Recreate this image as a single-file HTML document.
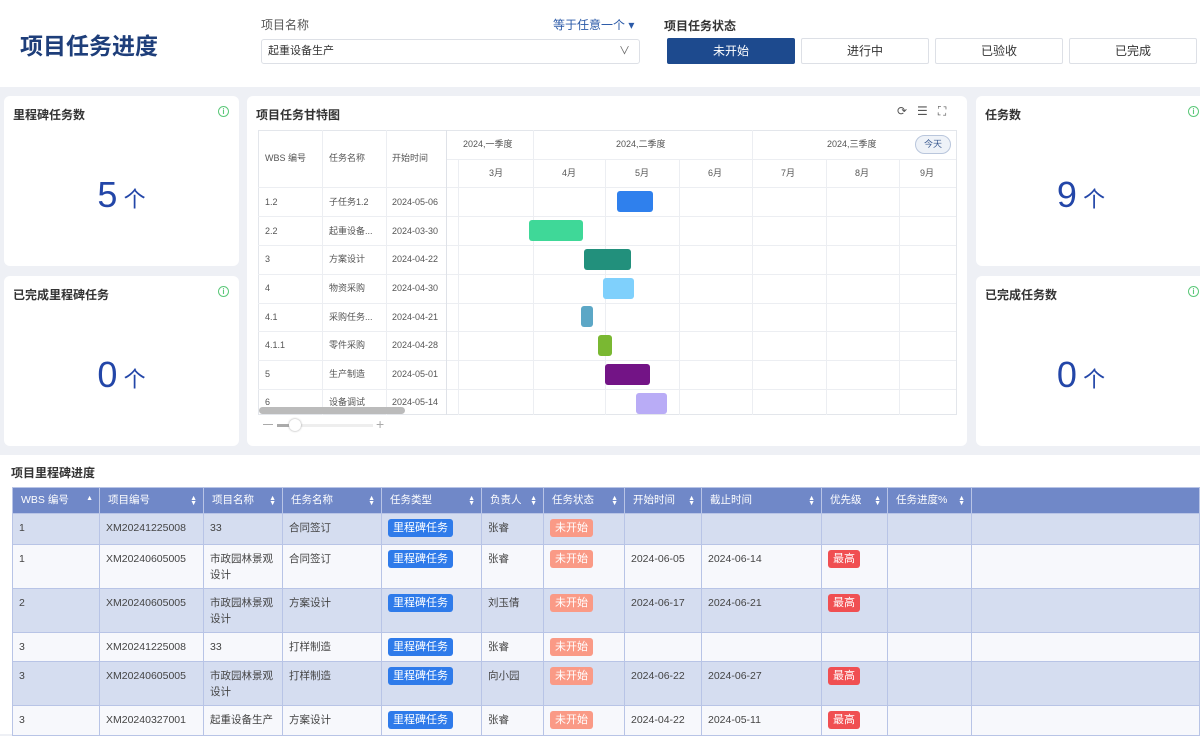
<!DOCTYPE html>
<html><head><meta charset="utf-8"><style>
*{box-sizing:border-box;margin:0;padding:0}
body{width:1200px;height:734px;overflow:hidden;background:#eef0f5;font-family:"Liberation Sans","Noto Sans CJK SC",sans-serif;color:#333;position:relative;font-size:11px}
.abs{position:absolute}
.card{position:absolute;background:#fff;border-radius:6px}
.ct{position:absolute;left:9px;top:10px;font-size:12px;font-weight:bold;color:#333}
.info{position:absolute;top:10px;width:11px;height:11px;border:1.3px solid #5cc87a;border-radius:50%;color:#5cc87a;font-size:8px;line-height:9px;text-align:center;font-weight:bold}
.num{position:absolute;width:100%;text-align:center;color:#2346a8;font-size:36px}
.num span{font-size:22px}
.btn{position:absolute;top:38px;height:26px;border:1px solid #dde0e6;background:#fff;font-size:12px;text-align:center;line-height:24px;color:#333;border-radius:2px}
.g{position:absolute;font-size:9px;color:#555;line-height:11px}
.vl{position:absolute;width:1px;background:#eceef2}
.hl{position:absolute;height:1px;background:#eceef2}
.bar{position:absolute;height:21px;border-radius:3px}
table{border-collapse:collapse;position:absolute;left:12px;top:487px;width:1188px;font-size:10.5px;table-layout:fixed}
td,th{border:1px solid #b8c4e6;vertical-align:top;padding:6px 6px 0;color:#444;text-align:left;font-weight:normal;line-height:16px;overflow:hidden;white-space:normal}
th{background:#7088c8;color:#fff;height:26px;padding:4px 8px;position:relative;line-height:16px}
th i{position:absolute;right:6px;top:8px;font-style:normal;font-size:7px;line-height:5px}
tr.a td{background:#d5ddf0}
tr.b td{background:#f7f8fc}
.tg,.ts,.tp{display:inline-block;color:#fff;border-radius:3px;padding:0 5px;font-size:11px;line-height:18px;margin-top:-1px}
.tg{background:#2f7bea}.ts{background:#fa9a86}.tp{background:#f04f52}
</style></head><body>
<div class="abs" style="left:0;top:0;width:1200px;height:87px;background:#fff"></div>
<div class="abs" style="left:20px;top:27px;font-size:23px;font-weight:bold;color:#1e3e7a">项目任务进度</div>
<div class="abs" style="left:261px;top:16px;font-size:12px;color:#555">项目名称</div>
<div class="abs" style="left:553px;top:16px;font-size:12px;color:#2b5aa8">等于任意一个 ▾</div>
<div class="abs" style="left:261px;top:39px;width:379px;height:25px;border:1px solid #dde0e6;border-radius:3px;font-size:11px;line-height:23px;padding-left:6px">起重设备生产<span style="position:absolute;right:9px;color:#666">&#x2228;</span></div>
<div class="abs" style="left:664px;top:17px;font-size:12px;font-weight:bold">项目任务状态</div>
<div class="btn" style="left:667px;width:128px;background:#1d4a8e;color:#fff;border-color:#1d4a8e">未开始</div>
<div class="btn" style="left:801px;width:128px">进行中</div>
<div class="btn" style="left:935px;width:128px">已验收</div>
<div class="btn" style="left:1069px;width:128px">已完成</div>

<div class="card" style="left:4px;top:96px;width:235px;height:170px"><div class="ct">里程碑任务数</div><div class="info" style="left:214px">i</div><div class="num" style="top:78px">5<span> 个</span></div></div>
<div class="card" style="left:4px;top:276px;width:235px;height:170px"><div class="ct">已完成里程碑任务</div><div class="info" style="left:214px">i</div><div class="num" style="top:78px">0<span> 个</span></div></div>
<div class="card" style="left:976px;top:96px;width:230px;height:170px"><div class="ct">任务数</div><div class="info" style="left:212px">i</div><div class="num" style="top:78px;width:210px">9<span> 个</span></div></div>
<div class="card" style="left:976px;top:276px;width:230px;height:170px"><div class="ct">已完成任务数</div><div class="info" style="left:212px">i</div><div class="num" style="top:78px;width:210px">0<span> 个</span></div></div>

<div class="card" style="left:247px;top:96px;width:720px;height:350px">
<div class="ct">项目任务甘特图</div>
<div class="abs" style="left:650px;top:8px;font-size:12px;color:#555;letter-spacing:10px">⟳☰⛶</div>
</div>
<div class="abs" style="left:258px;top:130px;width:699px;height:285px;border:1px solid #e3e6eb;background:#fff"></div>
<div class="hl" style="left:446px;top:159px;width:510px"></div>
<div class="hl" style="left:258px;top:187px;width:698px"></div>
<div class="hl" style="left:258px;top:216px;width:698px"></div><div class="hl" style="left:258px;top:245px;width:698px"></div><div class="hl" style="left:258px;top:274px;width:698px"></div><div class="hl" style="left:258px;top:303px;width:698px"></div><div class="hl" style="left:258px;top:331px;width:698px"></div><div class="hl" style="left:258px;top:360px;width:698px"></div><div class="hl" style="left:258px;top:389px;width:698px"></div>
<div class="vl" style="left:322px;top:130px;height:285px"></div><div class="vl" style="left:386px;top:130px;height:285px"></div><div class="vl" style="left:446px;top:130px;height:285px;background:#dfe2e8"></div>
<div class="vl" style="left:458px;top:159px;height:256px"></div><div class="vl" style="left:533px;top:130px;height:285px"></div><div class="vl" style="left:605px;top:159px;height:256px"></div><div class="vl" style="left:679px;top:159px;height:256px"></div><div class="vl" style="left:752px;top:130px;height:285px"></div><div class="vl" style="left:826px;top:159px;height:256px"></div><div class="vl" style="left:899px;top:159px;height:256px"></div>
<div class="g" style="left:265px;top:153px">WBS 编号</div><div class="g" style="left:329px;top:153px">任务名称</div><div class="g" style="left:392px;top:153px">开始时间</div>
<div class="g" style="left:463px;top:139px">2024,一季度</div><div class="g" style="left:616px;top:139px">2024,二季度</div><div class="g" style="left:827px;top:139px">2024,三季度</div>
<div class="abs" style="left:915px;top:135px;width:36px;height:19px;border:1px solid #b9c6dc;background:#eef2f8;border-radius:10px;font-size:9px;color:#3a5a90;text-align:center;line-height:17px">今天</div>
<div class="g" style="left:489px;top:168px">3月</div><div class="g" style="left:562px;top:168px">4月</div><div class="g" style="left:635px;top:168px">5月</div><div class="g" style="left:708px;top:168px">6月</div><div class="g" style="left:781px;top:168px">7月</div><div class="g" style="left:855px;top:168px">8月</div><div class="g" style="left:920px;top:168px">9月</div>
<div class="g" style="left:265px;top:197px">1.2</div><div class="g" style="left:329px;top:197px">子任务1.2</div><div class="g" style="left:392px;top:197px">2024-05-06</div>
<div class="g" style="left:265px;top:226px">2.2</div><div class="g" style="left:329px;top:226px">起重设备...</div><div class="g" style="left:392px;top:226px">2024-03-30</div>
<div class="g" style="left:265px;top:254px">3</div><div class="g" style="left:329px;top:254px">方案设计</div><div class="g" style="left:392px;top:254px">2024-04-22</div>
<div class="g" style="left:265px;top:283px">4</div><div class="g" style="left:329px;top:283px">物资采购</div><div class="g" style="left:392px;top:283px">2024-04-30</div>
<div class="g" style="left:265px;top:312px">4.1</div><div class="g" style="left:329px;top:312px">采购任务...</div><div class="g" style="left:392px;top:312px">2024-04-21</div>
<div class="g" style="left:265px;top:340px">4.1.1</div><div class="g" style="left:329px;top:340px">零件采购</div><div class="g" style="left:392px;top:340px">2024-04-28</div>
<div class="g" style="left:265px;top:369px">5</div><div class="g" style="left:329px;top:369px">生产制造</div><div class="g" style="left:392px;top:369px">2024-05-01</div>
<div class="g" style="left:265px;top:397px">6</div><div class="g" style="left:329px;top:397px">设备调试</div><div class="g" style="left:392px;top:397px">2024-05-14</div>
<div class="bar" style="left:617px;top:191px;width:36px;background:#2f80ed"></div>
<div class="bar" style="left:529px;top:220px;width:54px;background:#3fd898"></div>
<div class="bar" style="left:584px;top:249px;width:47px;background:#22907c"></div>
<div class="bar" style="left:603px;top:278px;width:31px;background:#7fd0fc"></div>
<div class="bar" style="left:581px;top:306px;width:12px;background:#5ca7c6"></div>
<div class="bar" style="left:598px;top:335px;width:14px;background:#7ab832"></div>
<div class="bar" style="left:605px;top:364px;width:45px;background:#731486"></div>
<div class="bar" style="left:636px;top:393px;width:31px;background:#b9acf6"></div>
<div class="abs" style="left:259px;top:407px;width:146px;height:7px;background:#bbb;border-radius:4px"></div>
<div class="abs" style="left:263px;top:424px;width:10px;height:1px;background:#aaa"></div>
<div class="abs" style="left:277px;top:424px;width:96px;height:3px;background:#eee"></div>
<div class="abs" style="left:277px;top:424px;width:14px;height:3px;background:#aaa"></div>
<div class="abs" style="left:289px;top:419px;width:12px;height:12px;border-radius:50%;background:#fff;box-shadow:0 0 2px #999"></div>
<div class="abs" style="left:376px;top:416px;font-size:14px;color:#aaa">+</div>

<div class="abs" style="left:0;top:455px;width:1200px;height:279px;background:#fff"></div>
<div class="abs" style="left:11px;top:464px;font-size:12px;font-weight:bold">项目里程碑进度</div>
<table>
<colgroup><col style="width:87px"><col style="width:104px"><col style="width:79px"><col style="width:99px"><col style="width:100px"><col style="width:62px"><col style="width:81px"><col style="width:77px"><col style="width:120px"><col style="width:66px"><col style="width:84px"><col></colgroup>
<tr style="height:26px"><th>WBS 编号<i>▲</i></th><th>项目编号<i>▲<br>▼</i></th><th>项目名称<i>▲<br>▼</i></th><th>任务名称<i>▲<br>▼</i></th><th>任务类型<i>▲<br>▼</i></th><th>负责人<i>▲<br>▼</i></th><th>任务状态<i>▲<br>▼</i></th><th>开始时间<i>▲<br>▼</i></th><th>截止时间<i>▲<br>▼</i></th><th>优先级<i>▲<br>▼</i></th><th>任务进度%<i>▲<br>▼</i></th><th></th></tr>
<tr class="a" style="height:31px"><td>1</td><td>XM20241225008</td><td>33</td><td>合同签订</td><td><span class="tg">里程碑任务</span></td><td>张睿</td><td><span class="ts">未开始</span></td><td></td><td></td><td></td><td></td><td></td></tr>
<tr class="b" style="height:44px"><td>1</td><td>XM20240605005</td><td>市政园林景观设计</td><td>合同签订</td><td><span class="tg">里程碑任务</span></td><td>张睿</td><td><span class="ts">未开始</span></td><td>2024-06-05</td><td>2024-06-14</td><td><span class="tp">最高</span></td><td></td><td></td></tr>
<tr class="a" style="height:44px"><td>2</td><td>XM20240605005</td><td>市政园林景观设计</td><td>方案设计</td><td><span class="tg">里程碑任务</span></td><td>刘玉倩</td><td><span class="ts">未开始</span></td><td>2024-06-17</td><td>2024-06-21</td><td><span class="tp">最高</span></td><td></td><td></td></tr>
<tr class="b" style="height:29px"><td>3</td><td>XM20241225008</td><td>33</td><td>打样制造</td><td><span class="tg">里程碑任务</span></td><td>张睿</td><td><span class="ts">未开始</span></td><td></td><td></td><td></td><td></td><td></td></tr>
<tr class="a" style="height:44px"><td>3</td><td>XM20240605005</td><td>市政园林景观设计</td><td>打样制造</td><td><span class="tg">里程碑任务</span></td><td>向小园</td><td><span class="ts">未开始</span></td><td>2024-06-22</td><td>2024-06-27</td><td><span class="tp">最高</span></td><td></td><td></td></tr>
<tr class="b" style="height:30px"><td>3</td><td>XM20240327001</td><td style="white-space:nowrap">起重设备生产</td><td>方案设计</td><td><span class="tg">里程碑任务</span></td><td>张睿</td><td><span class="ts">未开始</span></td><td>2024-04-22</td><td>2024-05-11</td><td><span class="tp">最高</span></td><td></td><td></td></tr>
</table>
</body></html>
